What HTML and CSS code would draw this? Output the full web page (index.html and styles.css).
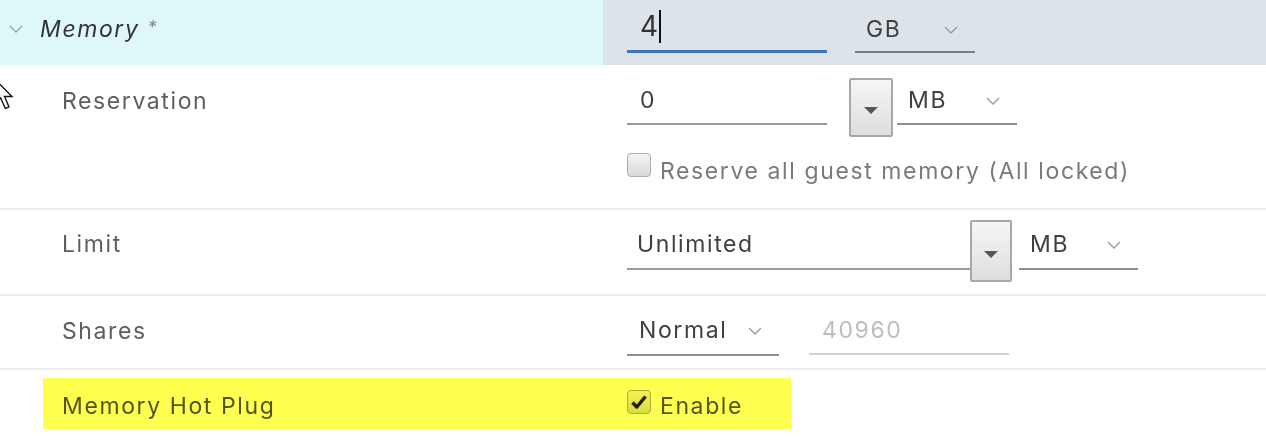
FILE: index.html
```html
<!DOCTYPE html>
<html lang="en">
<head>
<meta charset="utf-8">
<title>Memory settings</title>
<link rel="stylesheet" href="styles.css">
</head>
<body>
<div class="panel">
  <div class="row header">
    <div class="label-cell head-label">
      <svg class="caret" width="14" height="8" viewBox="0 0 14 8"><path d="M1 1 L7 7 L13 1" fill="none" stroke="#9aa0a3" stroke-width="1.3"/></svg>
      <span class="title">Memory <span class="star">*</span></span>
    </div>
    <div class="value-cell head-value">
      <div class="field focus"><span class="big">4</span><span class="caret-line"></span></div>
      <div class="select gb"><span>GB</span><svg class="chev" width="14" height="8" viewBox="0 0 14 8"><path d="M1 1 L7 7 L13 1" fill="none" stroke="#9a9a9a" stroke-width="1.3"/></svg></div>
    </div>
  </div>

  <div class="row res">
    <div class="label-cell"><span class="label">Reservation</span></div>
    <div class="value-cell stack">
      <div class="controls">
        <div class="field w200"><span>0</span></div>
        <div class="drop-btn b1"><span class="tri"></span></div>
        <div class="select mb1"><span>MB</span><svg class="chev" width="14" height="8" viewBox="0 0 14 8"><path d="M1 1 L7 7 L13 1" fill="none" stroke="#9a9a9a" stroke-width="1.3"/></svg></div>
      </div>
      <div class="check-line">
        <span class="checkbox"></span>
        <span class="check-text muted">Reserve all guest memory (All locked)</span>
      </div>
    </div>
  </div>

  <div class="row lim">
    <div class="label-cell"><span class="label">Limit</span></div>
    <div class="value-cell">
      <div class="controls">
        <div class="field w343"><span>Unlimited</span></div>
        <div class="drop-btn b2"><span class="tri"></span></div>
        <div class="select mb2"><span>MB</span><svg class="chev" width="14" height="8" viewBox="0 0 14 8"><path d="M1 1 L7 7 L13 1" fill="none" stroke="#9a9a9a" stroke-width="1.3"/></svg></div>
      </div>
    </div>
  </div>

  <div class="row shr">
    <div class="label-cell"><span class="label">Shares</span></div>
    <div class="value-cell">
      <div class="controls">
        <div class="select normal"><span>Normal</span><svg class="chev" width="14" height="8" viewBox="0 0 14 8"><path d="M1 1 L7 7 L13 1" fill="none" stroke="#9a9a9a" stroke-width="1.3"/></svg></div>
        <div class="field disabled"><span>40960</span></div>
      </div>
    </div>
  </div>

  <div class="row hot">
    <div class="label-cell"><span class="label dark">Memory Hot Plug</span></div>
    <div class="value-cell">
      <div class="check-line">
        <span class="checkbox checked"><svg width="18" height="16" viewBox="0 0 18 16"><path d="M2.5 8.5 L6.8 13 L15.5 2.5" fill="none" stroke="#1f1f1f" stroke-width="3.4" stroke-linejoin="round"/></svg></span>
        <span class="check-text">Enable</span>
      </div>
    </div>
  </div>

  <div class="highlight"></div>
  <svg class="cursor" width="24" height="34" viewBox="0 0 16 22"><path d="M0.5 0.5 L0.5 17 L4.5 13 L7.5 20 L10 19 L7 12 L12 12 Z" fill="#fff" stroke="#111" stroke-width="0.9" stroke-linejoin="miter"/></svg>
</div>
</body>
</html>
```
FILE: styles.css
```css
* { box-sizing: border-box; }
html, body { margin: 0; padding: 0; background: #fff; }
body {
  font-family: Inter, "Liberation Sans", sans-serif;
  font-size: 23px;
  line-height: 28px;
  letter-spacing: 1.6px;
  color: #444;
  overflow: hidden;
}
.panel {
  position: relative;
  width: 1266px;
  height: 440px;
}
.row {
  display: flex;
  border-bottom: 2px solid #ececec;
}
.label-cell {
  width: 603px;
  flex: none;
  padding-left: 62px;
}
.value-cell {
  flex: 1;
  padding-left: 24px;
}
.label { color: #5e5e5e; display: block; }
.label.dark { color: #555; }

/* header */
.header { height: 65px; border-bottom: none; }
.head-label {
  background: #def8fa;
  padding-left: 9px;
  display: flex;
  align-items: flex-start;
  padding-top: 14px;
}
.caret { margin-top: 11px; margin-right: 17px; }
.title { font-style: italic; color: #333; }
.star { color: #888; font-size: 18px; vertical-align: 3px; }
.head-value {
  background: #dce4e9;
  display: flex;
  align-items: flex-start;
  padding-top: 9px;
}

/* fields */
.field {
  display: flex;
  align-items: flex-start;
  padding-left: 11px;
  border-bottom: 2px solid #9b9b9b;
  height: 39px;
  color: #404040;
  flex: none;
}
.field.focus {
  width: 200px;
  height: 44px;
  border-bottom: 3px solid #3b78b7;
  padding-left: 13px;
}
.big { font-size: 28px; line-height: 34px; color: #333; letter-spacing: 0; }
.caret-line {
  width: 2px;
  height: 33px;
  background: #111;
  margin-left: 1px;
  margin-top: 1px;
}
.w200 { width: 200px; margin-top: 8px; padding-left: 13px; }
.w343 { width: 343px; margin-top: 10px; height: 40px; padding-left: 10px; }
.disabled {
  width: 200px;
  margin-left: 30px;
  color: #bdbdbd;
  border-bottom-color: #d2d2d2;
  padding-left: 13px;
}

.select {
  display: flex;
  align-items: flex-start;
  justify-content: space-between;
  padding-left: 11px;
  padding-right: 17px;
  border-bottom: 2px solid #8f8f8f;
  height: 39px;
  color: #404040;
  flex: none;
}
.select .chev { margin-top: 11px; }
.gb { width: 120px; margin-left: 28px; height: 44px; border-bottom-color: #7d7d7d; padding-top: 6px; }
.mb1 { width: 120px; margin-left: 4px; margin-top: 8px; }
.mb2 { width: 119px; margin-left: 7px; margin-top: 10px; height: 40px; }
.normal { width: 152px; height: 40px; padding-left: 12px; }

.controls { display: flex; align-items: flex-start; }

.drop-btn {
  flex: none;
  display: flex;
  align-items: center;
  justify-content: center;
  border: 2px solid #a8a8a8;
  border-radius: 2px;
  background: linear-gradient(#f6f6f6, #dedede);
  padding-top: 0;
}
.b1 { width: 44px; height: 59px; margin-left: 22px; }
.b2 { width: 42px; height: 62px; }
.tri {
  width: 0; height: 0;
  border-left: 7px solid transparent;
  border-right: 7px solid transparent;
  border-top: 7px solid #555;
  margin-top: 6px;
}

/* rows */
.res { height: 145px; }
.res .label-cell { padding-top: 22px; }
.res .value-cell { padding-top: 13px; }
.check-line { display: flex; align-items: flex-start; margin-top: 16px; }
.checkbox {
  width: 24px;
  height: 24px;
  border: 1.5px solid #adadad;
  border-radius: 4px;
  background: linear-gradient(#f3f3f3, #dadada);
  flex: none;
  display: flex;
  align-items: center;
  justify-content: center;
}
.check-text { margin-left: 9px; margin-top: 4px; }
.muted { color: #7a7a7a; }

.lim { height: 86px; }
.lim .label-cell { padding-top: 20px; }
.lim .value-cell { padding-top: 10px; }

.shr { height: 74px; }
.shr .label-cell { padding-top: 21px; }
.shr .value-cell { padding-top: 20px; }

.hot { height: 70px; border-bottom: none; }
.hot .label-cell { padding-top: 22px; }
.hot .check-line { margin-top: 20px; }
.hot .check-text { color: #555; margin-top: 2px; }

.highlight {
  position: absolute;
  left: 43px;
  top: 378px;
  width: 748px;
  height: 51px;
  background: #ffff50;
  mix-blend-mode: multiply;
  pointer-events: none;
}
.cursor {
  position: absolute;
  left: -6px;
  top: 78px;
}
```
